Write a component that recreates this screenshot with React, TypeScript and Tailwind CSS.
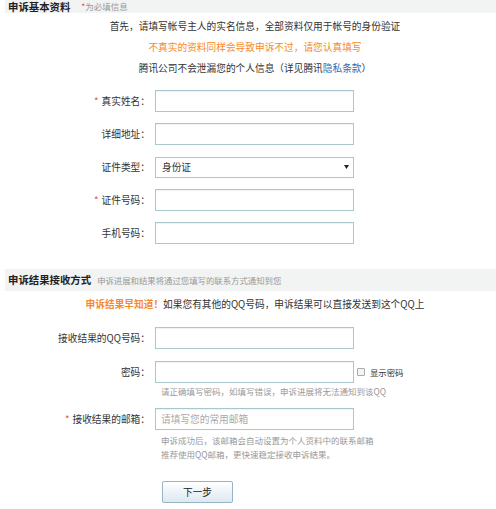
import React from 'react';

const font = { fontFamily: '"Noto Sans CJK SC", "Liberation Sans", sans-serif' };

function Label({ text, required }: { text: string; required?: boolean }) {
  return (
    <div className="w-[150px] shrink-0 text-right text-[9.7px] text-[#333] leading-[22px]">
      {required && <span className="text-[#e5554f] mr-[3px]">*</span>}
      {text}：
    </div>
  );
}

function TextInput({ placeholder }: { placeholder?: string }) {
  return (
    <input
      className="w-[199px] h-[22px] ml-[5px] border border-[#a9c7cf] bg-white px-[5px] text-[9.7px] text-[#333] outline-none placeholder:text-[#aaa] shadow-[inset_0_1px_1px_rgba(0,0,0,0.06)]"
      placeholder={placeholder}
    />
  );
}

export default function App() {
  return (
    <div className="w-[496px] h-[509px] overflow-hidden bg-white text-[#333]" style={font}>
      {/* section 1 header */}
      <div className="ml-[5px] h-[13px] bg-[#f2f3f3] flex items-end pl-[3px]">
        <span className="text-[10.4px] font-bold text-[#222] leading-[13px]">申诉基本资料</span>
        <span className="ml-[11px] text-[8.5px] text-[#999] leading-[13px]">
          <span className="text-[#e5554f]">*</span>为必填信息
        </span>
      </div>

      <div className="mt-[3px] pl-[14px] text-center text-[9.7px] leading-[21px]">
        <p>首先，请填写帐号主人的实名信息，全部资料仅用于帐号的身份验证</p>
        <p className="text-[#f7892b]">不真实的资料同样会导致申诉不过，请您认真填写</p>
        <p>
          腾讯公司不会泄漏您的个人信息（详见腾讯<span className="text-[#2f6db5]">隐私条款</span>）
        </p>
      </div>

      <div className="mt-[11px] flex flex-col gap-[11px]">
        <div className="flex h-[22px] items-center">
          <Label text="真实姓名" required />
          <TextInput />
        </div>
        <div className="flex h-[22px] items-center">
          <Label text="详细地址" />
          <TextInput />
        </div>
        <div className="flex h-[22px] items-center">
          <Label text="证件类型" />
          <div className="relative ml-[5px] w-[199px] h-[21px]">
            <select className="block appearance-none w-full h-[21px] border border-[#a9c7cf] bg-white pl-[6px] py-0 text-[9.7px] leading-[19px] text-[#333] outline-none">
              <option>身份证</option>
            </select>
            <svg className="pointer-events-none absolute right-[5px] top-[8px]" width="5" height="4" viewBox="0 0 5 4">
              <path d="M0 0H5L2.5 4Z" fill="#222" />
            </svg>
          </div>
        </div>
        <div className="flex h-[22px] items-center">
          <Label text="证件号码" required />
          <TextInput />
        </div>
        <div className="flex h-[22px] items-center">
          <Label text="手机号码" />
          <TextInput />
        </div>
      </div>

      {/* section 2 header */}
      <div className="mt-[25px] ml-[5px] h-[22px] bg-[#f2f3f3] flex items-center pl-[3px]">
        <span className="text-[10.4px] font-bold text-[#222]">申诉结果接收方式</span>
        <span className="ml-[6px] text-[8.4px] text-[#999]">申诉进展和结果将通过您填写的联系方式通知到您</span>
      </div>

      <p className="mt-[3px] pl-[14px] text-center text-[9.7px] leading-[21px]">
        <span className="font-bold text-[#f7892b]">申诉结果早知道！</span>如果您有其他的QQ号码，申诉结果可以直接发送到这个QQ上
      </p>

      <div className="mt-[12px] flex h-[22px] items-center">
        <Label text="接收结果的QQ号码" />
        <TextInput />
      </div>

      <div className="mt-[12px] flex h-[22px] items-center">
        <Label text="密码" />
        <TextInput />
        <span className="ml-[3px] w-[8px] h-[8px] border border-[#aaa] rounded-[1px] bg-[#f4f4f4]" />
        <span className="ml-[5px] text-[8.4px] text-[#333]">显示密码</span>
      </div>
      <p className="mt-[1px] pl-[161px] text-[8.5px] leading-[14px] text-[#999]">
        请正确填写密码，如填写错误，申诉进展将无法通知到该QQ
      </p>

      <div className="mt-[10px] flex h-[22px] items-center">
        <Label text="接收结果的邮箱" required />
        <TextInput placeholder="请填写您的常用邮箱" />
      </div>
      <div className="mt-[3px] pl-[161px] text-[8.5px] leading-[14px] text-[#999]">
        <p>申诉成功后，该邮箱会自动设置为个人资料中的联系邮箱</p>
        <p>推荐使用QQ邮箱，更快速稳定接收申诉结果。</p>
      </div>

      <div className="mt-[16px] pl-[162px]">
        <button className="w-[71px] h-[22px] border border-[#98b3c6] rounded-[2px] bg-gradient-to-b from-white to-[#dce9f2] text-[9.7px] text-[#222]">
          下一步
        </button>
      </div>
    </div>
  );
}
